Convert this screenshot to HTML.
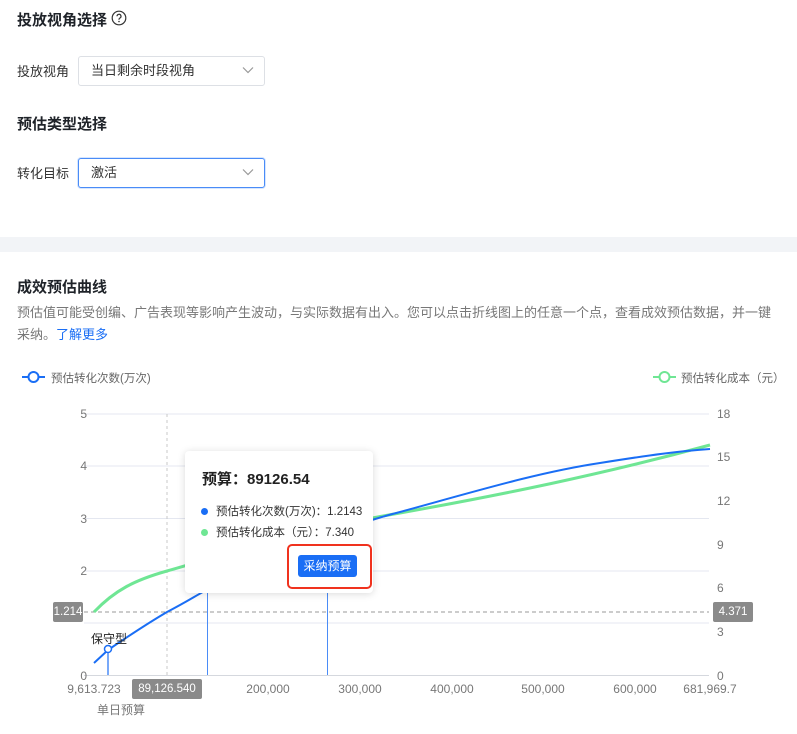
<!DOCTYPE html>
<html><head><meta charset="utf-8"><style>
*{margin:0;padding:0;box-sizing:border-box}
body{width:797px;height:734px;background:#fff;font-family:"Liberation Sans","Noto Sans CJK SC",sans-serif;position:relative;overflow:hidden;color:#1f2329}
.a{position:absolute;white-space:nowrap}
.h{font-size:15px;font-weight:bold;color:#1f2329}
.lbl{font-size:13px;color:#333}
.sel{position:absolute;border:1px solid #dde0e5;border-radius:3px;background:#fff;font-size:13px;padding-left:12px;line-height:28px;color:#333}
.sel svg{position:absolute;right:10px;top:9px}
.t{font-size:11.5px;color:#666}
.tag{position:absolute;background:#8a8a8a;color:#fff;font-size:11.5px;border-radius:2px;text-align:center;line-height:20px}
</style></head><body>
<div class="a h" style="left:17px;top:9px">投放视角选择</div>
<svg class="a" style="left:111px;top:10px" width="16" height="16" viewBox="0 0 16 16"><circle cx="8" cy="8" r="6.8" fill="none" stroke="#333" stroke-width="1.2"/><path d="M6 6.3a2 2 0 1 1 2.8 1.8c-.6.3-.8.6-.8 1.3v.4" fill="none" stroke="#333" stroke-width="1.2"/><circle cx="8" cy="11.5" r=".8" fill="#333"/></svg>
<div class="a lbl" style="left:17px;top:61px">投放视角</div>
<div class="sel" style="left:78px;top:56px;width:187px;height:30px">当日剩余时段视角<svg width="12" height="8" viewBox="0 0 12 8"><path d="M1 1.5l5 5 5-5" fill="none" stroke="#999" stroke-width="1.2"/></svg></div>
<div class="a h" style="left:17px;top:113px">预估类型选择</div>
<div class="a lbl" style="left:17px;top:163px">转化目标</div>
<div class="sel" style="left:78px;top:158px;width:187px;height:30px;border-color:#4a8cf7;box-shadow:0 0 0 1px #d6e6ff">激活<svg width="12" height="8" viewBox="0 0 12 8"><path d="M1 1.5l5 5 5-5" fill="none" stroke="#999" stroke-width="1.2"/></svg></div>
<div class="a" style="left:0;top:237px;width:797px;height:15px;background:#f2f4f7"></div>
<div class="a h" style="left:17px;top:276px">成效预估曲线</div>
<div class="a" style="left:17px;top:302px;font-size:13px;color:#777;line-height:22px;white-space:normal;width:762px">预估值可能受创编、广告表现等影响产生波动，与实际数据有出入。您可以点击折线图上的任意一个点，查看成效预估数据，并一键采纳。<span style="color:#1a6ef5">了解更多</span></div>
<svg class="a" style="left:0;top:360px" width="797" height="374">
<g transform="translate(0,-360)">
<line x1="22" y1="377" x2="45" y2="377" stroke="#1a6ef5" stroke-width="2"/><circle cx="33.5" cy="377" r="5" fill="#fff" stroke="#1a6ef5" stroke-width="2"/>
<line x1="653" y1="377" x2="676" y2="377" stroke="#6fe694" stroke-width="2"/><circle cx="664.5" cy="377" r="5" fill="#fff" stroke="#6fe694" stroke-width="2"/>
<g stroke="#e4e7f0" stroke-width="1">
<line x1="84" y1="414" x2="709" y2="414"/><line x1="84" y1="466" x2="709" y2="466"/><line x1="84" y1="518.5" x2="709" y2="518.5"/><line x1="84" y1="571" x2="709" y2="571"/><line x1="84" y1="623" x2="709" y2="623"/></g>
<line x1="84" y1="675.5" x2="709" y2="675.5" stroke="#d5d8de"/>
<line x1="167" y1="414" x2="167" y2="675" stroke="#c8c8c8" stroke-dasharray="3,3"/>
<line x1="84" y1="612" x2="709" y2="612" stroke="#999" stroke-dasharray="4,3"/>
<line x1="207.5" y1="590" x2="207.5" y2="675" stroke="#4a8cf7"/>
<line x1="327.5" y1="530" x2="327.5" y2="675" stroke="#4a8cf7"/>
<line x1="108" y1="650" x2="108" y2="675" stroke="#4a8cf7" stroke-width="1.5"/>
<path d="M94 612 C115 590 135 580 167 571 C230 553 300 530 400 513 C500 495 600 475 710 445" fill="none" stroke="#6fe694" stroke-width="3"/>
<path d="M94 663 L108 650 C130 635 150 622 167 612 C190 600 200 593 207 590 C280 556 330 530 400 512 C480 490 540 472 600 463 C650 455 680 451 710 449" fill="none" stroke="#1a6ef5" stroke-width="2"/>
<circle cx="108" cy="649" r="3.5" fill="#fff" stroke="#1a6ef5" stroke-width="1.5"/>
<text x="91" y="643" font-size="12" fill="#222">保守型</text>
<g font-size="12" fill="#777" text-anchor="end"><text x="87" y="418">5</text><text x="87" y="470">4</text><text x="87" y="523">3</text><text x="87" y="575">2</text><text x="87" y="680">0</text></g>
<g font-size="12" fill="#777"><text x="717" y="418">18</text><text x="717" y="461">15</text><text x="717" y="505">12</text><text x="717" y="549">9</text><text x="717" y="592">6</text><text x="717" y="636">3</text><text x="717" y="680">0</text></g>
<g font-size="12" fill="#777" text-anchor="middle"><text x="94" y="693">9,613.723</text><text x="268" y="693">200,000</text><text x="360" y="693">300,000</text><text x="452" y="693">400,000</text><text x="543" y="693">500,000</text><text x="635" y="693">600,000</text><text x="710" y="693">681,969.7</text><text x="121" y="714">单日预算</text></g>
</g></svg>
<div class="tag" style="left:53px;top:602px;width:30px">1.214</div>
<div class="tag" style="left:713px;top:602px;width:40px">4.371</div>
<div class="tag" style="left:132px;top:679px;width:70px">89,126.540</div>
<div class="a" style="left:185px;top:451px;width:188px;height:142px;background:#fff;border-radius:4px;box-shadow:0 1px 8px rgba(0,0,0,.15)">
<div class="a" style="left:17px;top:17px;font-size:15px;font-weight:bold;color:#222">预算：89126.54</div>
<div class="a" style="left:16px;top:52px;font-size:11.5px;color:#333"><span style="display:inline-block;width:7px;height:7px;border-radius:50%;background:#1a6ef5;margin-right:8px"></span>预估转化次数(万次)：1.2143</div>
<div class="a" style="left:16px;top:73px;font-size:11.5px;color:#333"><span style="display:inline-block;width:7px;height:7px;border-radius:50%;background:#6fe694;margin-right:8px"></span>预估转化成本（元）：7.340</div>
<div class="a" style="left:102px;top:93px;width:85px;height:45px;border:2px solid #f0321e;border-radius:5px"></div>
<div class="a" style="left:113px;top:104px;width:59px;height:22px;background:#1a6ef5;border-radius:3px;color:#fff;font-size:12px;text-align:center;line-height:22px">采纳预算</div>
</div>
<div class="a t" style="left:51px;top:370px">预估转化次数(万次)</div>
<div class="a t" style="left:681px;top:370px">预估转化成本（元）</div>
</body></html>
